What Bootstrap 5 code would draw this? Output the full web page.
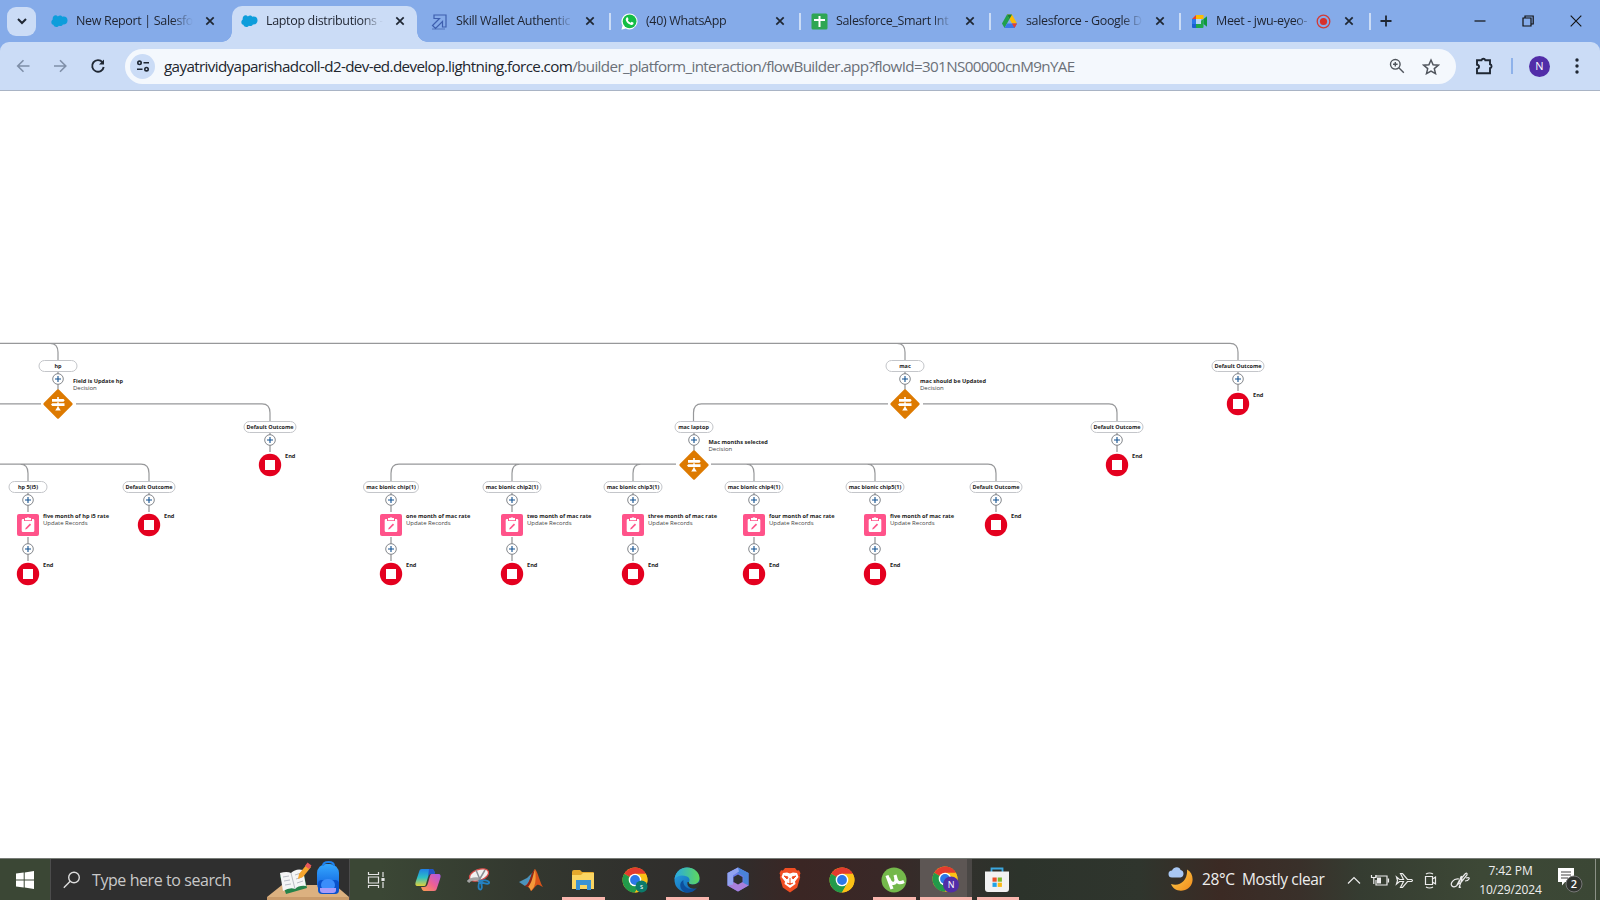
<!DOCTYPE html>
<html lang="en">
<head>
<meta charset="utf-8">
<title>Laptop distributions</title>
<link href="https://cdn.jsdelivr.net/npm/bootstrap@5.3.0/dist/css/bootstrap.min.css" rel="stylesheet">
<style>
html,body{height:100%}
body{font-family:"Open Sans","Noto Sans",sans-serif;color:#1f2430;overflow:hidden;background:#fff}
svg{display:block;flex:none}
.app{width:1600px;height:900px}
.strip{height:42px;background:#85abe9;padding-left:7px}
.tabsearch{width:29px;height:29px;border-radius:9px;background:#cbdcf6;margin-right:4px;flex:none}
.btab{width:190px;height:42px;padding-left:11px;font-size:12.5px;line-height:18px;position:relative;flex:none}
.btab .ttl{width:117px;margin-left:8px;white-space:nowrap;letter-spacing:-.34px;-webkit-mask-image:linear-gradient(90deg,#000 82%,transparent);mask-image:linear-gradient(90deg,#000 82%,transparent)}
.btab .x{margin-left:12px}
.btab.sep::after{content:"";position:absolute;right:-1px;top:13px;width:2px;height:17px;background:#cbdcf6}
.btab.rec .ttl{width:96px}
.btab.rec .x{margin-left:13px}
.btab.on::before{content:"";position:absolute;left:2px;top:6px;width:185px;height:36px;background:#cbdcf6;border-radius:10px 10px 0 0}
.btab.on>*{position:relative}
.flare{position:absolute!important;bottom:0;width:10px;height:10px}
.flare.l{left:-8px;background:radial-gradient(circle at 0 0,transparent 9.5px,#cbdcf6 10px)}
.flare.r{right:-7px;background:radial-gradient(circle at 100% 0,transparent 9.5px,#cbdcf6 10px)}
.bar-wrap{background:#85abe9}
.tools{height:49px;background:#cbdcf6;border-bottom:1px solid #a9b4c5;border-radius:9px 9px 0 0;padding-left:14px}
.omni{width:1331px;height:35px;border-radius:18px;background:#f4f8fd;padding-left:5px;padding-right:16px;margin-left:17px;flex:none}
.chip{width:25px;height:25px;border-radius:50%;background:#cbdcf6}
.url{font-size:15.2px;letter-spacing:-.63px;margin-left:9px;white-space:nowrap;line-height:22px;color:#6b7078}
.url b{font-weight:400;color:#22262e}
.ava{width:21px;height:21px;border-radius:50%;background:#512da8;color:#fff;font-size:11px}
.canvas{position:relative;flex:1;overflow:hidden}
.canvas .wires{position:absolute;left:0;top:0}
.nd{position:absolute;transform:translate(-50%,-50%)}
.pill{height:12px;min-width:39px;border:1px solid #c4c6ca;border-radius:6px;background:#fff;font-weight:700;font-size:5.5px;line-height:10px;text-align:center;white-space:nowrap;color:#222}
.cap{position:absolute;white-space:nowrap;font-size:6px;line-height:8px;transform:translateY(-50%);color:#444}
.cap.t{font-weight:700;color:#1d1d1d;font-size:5.62px}
.task{height:42px;color:#eee;background:linear-gradient(90deg,#3b4735 0,#3b4735 380px,#33382f 520px,#30302d 640px,#302c2b 740px,#3b2624 800px,#392827 880px,#31302c 960px,#2c332b 1020px,#2f352d 1140px,#3b2a24 1220px,#39302a 1300px,#353c31 1360px,#3d4836 1480px,#3b4735 1600px);border-top:1px solid #777b76}
.start{width:50px;flex:none}
.find{width:300px;flex:none;background:#2f2f2f;border:1px solid #4c4c4c;border-width:0 1px;padding-left:12px;font-size:16px;color:#c9c9c9}
.find span{margin-left:11px;letter-spacing:-.42px;white-space:nowrap}
.ic{width:51.8px;height:41px;position:relative;flex:none}
.ic.run::after{content:"";position:absolute;bottom:0;left:5px;right:4px;height:3px;background:#f9b6ae}
.ic.cur{background:linear-gradient(90deg,#5d5654 47px,#4a4745 47px)}
.ic.cur::after{left:0;right:0}
.wx{font-size:15.5px;white-space:nowrap;letter-spacing:-.36px}
.clk{font-size:12px;line-height:19px;text-align:center;width:69px;letter-spacing:-.1px;white-space:nowrap}
</style>
</head>
<body>
<svg width="0" height="0" class="position-absolute">
<defs>
<symbol id="x" viewBox="0 0 10 10"><path d="M1.3 1.3l7.4 7.4M8.700 1.3L1.3 8.700" stroke="#1f2733" stroke-width="1.7"/></symbol>
<symbol id="sf" viewBox="0 0 18 14"><path d="M7.300 2.200C8.600.7 11 .8 12 2.600c3-1 5.500.8 5.500 3.800 0 2.900-2.400 4.800-4.900 4.300-.9 1.600-2.800 2-4.200 1.200-1.700 2.300-5 1.700-5.900-.9C.7 10.700.2 9 .4 7.700c.1-1.100.7-1.900 1.400-2.400C1.300 1.500 5-.6 7.300 2.200z" fill="#0d9ddb"/></symbol>
<symbol id="chrome" viewBox="0 0 26 26"><circle cx="13" cy="13" r="12.500" fill="#fbc116"/><path d="M13 13L2.200 6.700A12.500 12.500 0 0 1 23.800 6.700z" fill="#e33b2e"/><path d="M13 .5a12.500 12.500 0 0 1 10.800 6.250H13z" fill="#e33b2e"/><path d="M2.200 6.700A12.500 12.500 0 0 0 13 25.500L18.400 16.100 13 13z" fill="#229a4a"/><path d="M13 6.750h10.800A12.500 12.500 0 0 1 13 25.500l5.400-9.400z" fill="#fbc116"/><circle cx="13" cy="13" r="6.300" fill="#fff"/><circle cx="13" cy="13" r="4.900" fill="#2b78e8"/></symbol>
<linearGradient id="g1" x1="0" y1="0" x2="0" y2="1"><stop offset="0" stop-color="#1f7fe8"/><stop offset=".5" stop-color="#2cbfc4"/><stop offset="1" stop-color="#e2d23a"/></linearGradient>
<linearGradient id="g2" x1="1" y1="0" x2="0" y2="1"><stop offset="0" stop-color="#a85be8"/><stop offset=".5" stop-color="#ef5f95"/><stop offset="1" stop-color="#f9a349"/></linearGradient>
<linearGradient id="g3" x1="0" y1="0" x2="1" y2="1"><stop offset="0" stop-color="#2ba5e0"/><stop offset="1" stop-color="#0a5bb0"/></linearGradient>
<linearGradient id="g4" x1="0" y1="0" x2="1" y2="0"><stop offset="0" stop-color="#28a8e4"/><stop offset="1" stop-color="#5fd85c"/></linearGradient>
<linearGradient id="g5" x1="0" y1="0" x2="0" y2="1"><stop offset="0" stop-color="#35a8ff"/><stop offset="1" stop-color="#0a55d8"/></linearGradient>
<linearGradient id="g6" x1="0" y1="0" x2="1" y2="1"><stop offset="0" stop-color="#ffd34d"/><stop offset="1" stop-color="#f08a1c"/></linearGradient>
</defs>
</svg>
<div class="app d-flex flex-column">
<div class="strip d-flex align-items-center">
  <div class="tabsearch d-flex align-items-center justify-content-center"><svg width="10" height="7"><path d="M1 1l4 4 4-4" fill="none" stroke="#1f2733" stroke-width="2"/></svg></div>
  <div class="btab d-flex align-items-center"><svg width="17" height="14"><use href="#sf"/></svg><div class="ttl">New Report | Salesfo</div><svg class="x" width="10" height="10"><use href="#x"/></svg></div>
  <div class="btab on d-flex align-items-center"><i class="flare l"></i><i class="flare r"></i><svg width="17" height="14"><use href="#sf"/></svg><div class="ttl">Laptop distributions -</div><svg class="x" width="10" height="10"><use href="#x"/></svg></div>
  <div class="btab sep d-flex align-items-center"><svg width="17" height="17" fill="none" stroke="#3e5fae" stroke-width="1.200"><path d="M3 2h12v12h-3.500V8.500L4.500 15.500 1.500 12.500 8.500 5.500H3z"/><path d="M1 16h13" stroke-width=".7"/></svg><div class="ttl">Skill Wallet Authentic</div><svg class="x" width="10" height="10"><use href="#x"/></svg></div>
  <div class="btab sep d-flex align-items-center"><svg width="17" height="17"><path d="M8.500.4a8 8 0 1 1-3.700 15.100L.4 16.700l1.200-4.200A8 8 0 0 1 8.500.4z" fill="#fff"/><circle cx="8.600" cy="8.400" r="6.900" fill="#14bd45"/><path d="M5.700 4.500c.8-.5 1.200 0 1.800 1.700L6.900 7.300c.7 1.400 1.500 2 2.700 2.500l1-1c1.700.7 2.100 1 1.900 1.600-.4 1.600-2.300 1.900-4 .9-2-1-3.700-3-3.800-4.800 0-.8.500-1.500 1-2z" fill="#fff"/></svg><div class="ttl">(40) WhatsApp</div><svg class="x" width="10" height="10"><use href="#x"/></svg></div>
  <div class="btab sep d-flex align-items-center"><svg width="17" height="17"><rect x=".5" y=".5" width="16" height="16" rx="1.500" fill="#2ea653"/><path d="M8.500 3v11M3 7h11" stroke="#fff" stroke-width="2"/></svg><div class="ttl">Salesforce_Smart Int</div><svg class="x" width="10" height="10"><use href="#x"/></svg></div>
  <div class="btab sep d-flex align-items-center"><svg width="17" height="17"><path d="M6 1.500h5l5 9h-5z" fill="#fbbc05"/><path d="M6 1.500L1 10.500 3.500 15 8.500 6z" fill="#20a04c"/><path d="M6 1.500h5L8.500 6z" fill="#12833a"/><path d="M3.500 15L6 10.500h10L13.500 15z" fill="#3a78ea"/><path d="M11 10.500h5L13.500 15z" fill="#e9402f"/></svg><div class="ttl">salesforce - Google D</div><svg class="x" width="10" height="10"><use href="#x"/></svg></div>
  <div class="btab sep rec d-flex align-items-center"><svg width="17" height="17"><path d="M1 6l4-4v4z" fill="#e9402f"/><path d="M5 2h7.500v4H5z" fill="#fbbc05"/><path d="M1 6h4v5H1z" fill="#2b78e8"/><path d="M1 11h4v4H2q-1 0-1-1z" fill="#1a5fd0"/><path d="M5 11h4V8.500l3.500-2.500V14q0 1-1 1H5z" fill="#1fa84a"/><path d="M12.500 6L16 3.200v10.600L12.500 11z" fill="#0f9a3c"/><path d="M5 6h5v5H5z" fill="#b8d4f4"/></svg><div class="ttl">Meet - jwu-eyeo-</div><svg width="15" height="15" class="ms-1"><circle cx="7.500" cy="7.500" r="6.300" fill="none" stroke="#d23a36" stroke-width="1.300"/><circle cx="7.500" cy="7.500" r="3.600" fill="#d8302b"/></svg><svg class="x" width="10" height="10"><use href="#x"/></svg></div>
  <svg width="12" height="12" style="margin-left:10px"><path d="M6 .5v11M.5 6h11" stroke="#1f2733" stroke-width="1.800"/></svg>
  <div class="ms-auto d-flex align-items-center" style="padding-right:18px;gap:36px"><svg width="12" height="12"><path d="M.5 6h11" stroke="#111" stroke-width="1.200"/></svg><svg width="12" height="12" fill="none" stroke="#111" stroke-width="1.200"><path d="M1 3h8v8H1zM3 3V1h8.200v8H9"/></svg><svg width="12" height="12"><path d="M.7.7l10.600 10.600M11.300.7L.7 11.300" stroke="#111" stroke-width="1.100"/></svg></div>
</div>
<div class="bar-wrap"><div class="tools d-flex align-items-center">
  <svg width="94" height="20" fill="none" stroke-width="1.600"><g stroke="#7f8fa8"><path d="M15.500 10H3.500M9.500 4.300L3.700 10l5.800 5.700"/><path d="M40 10h12M46 4.300l5.800 5.700L46 15.700"/></g><path d="M88.500 6.300A5.800 5.800 0 1 0 89.700 11" stroke="#1f2733" stroke-width="1.900"/><path d="M90 3.500v5h-5z" fill="#1f2733"/></svg>
  <div class="omni d-flex align-items-center"><div class="chip d-flex align-items-center justify-content-center"><svg width="14" height="12" fill="none" stroke="#1f2733" stroke-width="1.600"><circle cx="3.500" cy="2.800" r="1.700"/><path d="M7.500 2.800H13M1 9.200h5.500"/><circle cx="10.500" cy="9.200" r="1.700"/></svg></div>
  <div class="url"><b>gayatrividyaparishadcoll-d2-dev-ed.develop.lightning.force.com</b>/builder_platform_interaction/flowBuilder.app?flowId=301NS00000cnM9nYAE</div>
  <svg class="ms-auto" width="16" height="16" fill="none" stroke="#50555d" stroke-width="1.400"><circle cx="6.300" cy="6.300" r="4.800"/><path d="M9.800 9.800l5 5M4 6.300h4.600M6.300 4v4.600"/></svg>
  <svg style="margin-left:17px" width="18" height="17" fill="none" stroke="#50555d" stroke-width="1.500"><path d="M9 2l2.100 4.700 5.100.5-3.900 3.400 1.200 5L9 13l-4.500 2.600 1.200-5L1.800 7.200l5.100-.5z"/></svg></div>
  <svg style="margin-left:19px" width="18" height="18"><path d="M2 3.200h4.500a2 2 0 0 1 3.800 0H15v4a2 2 0 0 1 0 3.900v5.200H2v-4.600c2.700-.5 2.700-3.600 0-4z" fill="none" stroke="#1f2733" stroke-width="1.900"/></svg>
  <span style="margin-left:18px;width:2px;height:16px;background:#8eb2ea"></span>
  <div class="ava d-flex align-items-center justify-content-center" style="margin-left:16px">N</div>
  <svg style="margin-left:25px" width="4" height="16" fill="#1f2733"><circle cx="2" cy="2" r="1.700"/><circle cx="2" cy="8" r="1.700"/><circle cx="2" cy="14" r="1.700"/></svg>
</div></div>
<main class="canvas" id="flow">
<svg class="wires" width="1600" height="767" viewBox="0 91 1600 767" fill="none" stroke="#97989a" stroke-width="1.200">
<path d="M0 343.300H1230q8 0 8 9V360M50 343.300q8 0 8 9V360M897 343.300q8 0 8 9V360"/>
<path d="M0 403.800H41M76 403.800H262q8 0 8 9V421M888 403.800H701.500q-8 0-8 9V421M923 403.800H1109q8 0 8 9V421"/>
<path d="M0 464.200H141q8 0 8 9V481M20 464.200q8 0 8 9V481M676 464.200H399q-8 0-8 9V481M520 464.200q-8 0-8 9V481M641 464.200q-8 0-8 9V481M711 464.200H988q8 0 8 9V481M746 464.200q8 0 8 9V481M867 464.200q8 0 8 9V481"/>
</svg>
</main>
<footer class="task d-flex align-items-stretch">
  <div class="start d-flex align-items-center justify-content-center"><svg width="18" height="18" fill="#fff"><path d="M0 2.600L7.700 1.500V8.500H0zM8.700 1.400L18 0v8.500H8.700zM0 9.500h7.700v7L0 15.400zM8.700 9.500H18V18L8.700 16.600z"/></svg></div>
  <div class="find d-flex align-items-center"><svg width="18" height="18" fill="none" stroke="#ddd" stroke-width="1.400"><circle cx="11" cy="6.500" r="5.300"/><path d="M7.200 10.300L.8 16.800"/></svg><span>Type here to search</span>
   <svg class="ms-auto align-self-end" width="82" height="41" viewBox="268 859 82 41"><path d="M268 897l15-12h53l14 12v3h-82z" fill="#dcb180"/><path d="M268 897h82v3h-82z" fill="#c99b6b"/><path d="M281 876l23-5 4 17-21 6z" fill="#25834a"/><path d="M281 873q7-2 11 0 5-5 12-3l3 16q-7-1-11 3-5-2-12 2z" fill="#f4f5f6"/><path d="M292 873l4 16M284 877l6-1M285 881l6-1M286 885l6-1M296 875l6-2M297 879l6-2M298 883l6-2" stroke="#b8bcc4" fill="none"/><path d="M299 879l1-5 8-10 4 3-8 10z" fill="#f6a52c"/><path d="M306 866l2.500-3.500 4 3-2.500 3.500z" fill="#e8575a"/><rect x="318" y="864" width="22" height="29" rx="9" fill="url(#g5)"/><rect x="319" y="880" width="21" height="14" rx="4" fill="#0a52cc"/><path d="M324 866q0-4 5.500-4t5.500 4" stroke="#1d83f0" stroke-width="2" fill="none"/><rect x="322" y="879" width="14" height="12" rx="6" fill="#3b8dfa"/><path d="M321 888h16v2q0 3-3 3h-10q-3 0-3-3z" fill="#a79bfa"/></svg></div>
  <div class="ic d-flex align-items-center justify-content-center"><svg width="18" height="18" fill="none" stroke="#e3e3e3" stroke-width="1.200"><path d="M1.500 1v2.500h10V1M1.500 17v-2.500h10V17M1.500 6h10v6h-10zM16 1v5M16 11v6"/><path d="M15 7.500h2v2h-2z" fill="#fff"/></svg></div>
  <div class="ic d-flex align-items-center justify-content-center"><svg width="26" height="24"><path d="M7 1h9c3 0 3 2 4 4h-3c-2 0-3 1-4 4l-2 7c-.6 2-1 2-3 2H3c-3 0-3-2-2-5l3-9c.6-2 1-3 3-3z" fill="url(#g1)"/><path d="M19 23h-9c-3 0-3-2-4-4h3c2 0 3-1 4-4l2-7c.6-2 1-2 3-2h5c3 0 3 2 2 5l-3 9c-.6 2-1 3-3 3z" fill="url(#g2)"/><path d="M14 1h3c2 0 2.500 2 3 5h-4c-2 0-2 1-3 3z" fill="#2354c8"/></svg></div>
  <div class="ic d-flex align-items-center justify-content-center"><svg width="24" height="25"><ellipse cx="12" cy="8" rx="10" ry="5.500" transform="rotate(-20 12 8)" fill="#f1f1f1" stroke="#d64b48" stroke-width="1.300"/><path d="M1 15q3-4 11-3" stroke="#a4a4a4" stroke-width="3" fill="none"/><path d="M9 3l5 12M18 3l-7 12" stroke="#8b8f94" stroke-width="1.500"/><path d="M13 14c3-1 8-1 9 1s-3 3-9-1zM13 14c-2 3-2 8 0 8.500s3-4 0-8.500z" fill="none" stroke="#2380c0" stroke-width="1.800"/></svg></div>
  <div class="ic d-flex align-items-center justify-content-center"><svg width="26" height="24"><path d="M1 14l8-4 5-5-4 12-3 1z" fill="#4b93bd"/><path d="M7 18c5-2 6-13 10-17 3 3 5 14 8 18-3-1-4-3-6-2-3 2-4 5-6 6-1-3-3-5-6-5z" fill="#d95319"/><path d="M17 1c1 7 1 13-1 18l-3 4c-1-3-2-4-4-5 4-3 5-12 8-17z" fill="#f39a3b"/><path d="M17 1c-4 4-5 15-10 17l3 1c4-4 5-12 7-18z" fill="#8c2318"/></svg></div>
  <div class="ic run d-flex align-items-center justify-content-center"><svg width="24" height="22"><path d="M1 3q0-2 2-2h6l2 2h11q1 0 1 1v16H1z" fill="#e5a82c"/><path d="M1 6h9l2-2h11v16H1z" fill="#fbd562"/><path d="M5 11h15v10h-4v-5H9v5H5z" fill="#3b92d4"/></svg></div>
  <div class="ic d-flex align-items-center justify-content-center"><svg width="26" height="26"><use href="#chrome"/><circle cx="19.500" cy="19.500" r="6" fill="#0b7a6a"/><text x="17.900" y="22" font-size="6.500" fill="#fff">s</text></svg></div>
  <div class="ic run d-flex align-items-center justify-content-center"><svg width="26" height="26"><circle cx="13" cy="13" r="12.500" fill="url(#g3)"/><path d="M.6 12C1.500 4.500 7 .5 13 .5c7 0 12.500 5 12.500 10.500 0 4-3 6.500-6.500 6.500-3 0-5-1-4-2.500 1-1.300 1-4-2-5.500C8 7.500 3 8.500.6 12z" fill="url(#g4)"/><path d="M9.500 13c-1 5 3 9 8 9 2.500 0 4.500-.7 5.500-1.300C20 25 15 26.500 10.500 25 5 22 5 15 9.500 13z" fill="#0d4f9c"/><path d="M15 15c-1 1.500 1 2.500 4 2.500 2.600 0 4.600-1 5.700-2.500l.8 3.500-2 2.500c-6 2-11-1-10-6z" fill="#30332f"/></svg></div>
  <div class="ic d-flex align-items-center justify-content-center"><svg width="24" height="25"><path d="M12 .5L22.500 6v12.500L12 24.500 1.500 18.500V6z" fill="#6a7be8"/><path d="M12 .5L22.500 6v12.500l-5 2V9L10 5z" fill="#4a83d8"/><path d="M1.500 18.500L12 13l5.500 3 5 2.500L12 24.500z" fill="#a980dc"/><path d="M1.500 6L12 .5l1 4-6 4v9l-5.500 1z" fill="#91a4f0"/><path d="M12 7.500l4.500 2.500v5L12 17.500 7.500 15v-5z" fill="#303030"/></svg></div>
  <div class="ic d-flex align-items-center justify-content-center"><svg width="22" height="26"><path d="M6 1h10l2 2.500 2-.3 1.500 3-.8 2 .5 2-3 10.300L11 25.500 3.800 20.500.8 10.200l.5-2-.8-2 1.500-3 2 .3z" fill="#f14e23"/><path d="M4 6l4-.5 3 1 3-1L18 6l1.500 4-3.500 4.500.5 2.500L11 21l-5.500-4 .5-2.500L2.500 10z" fill="#fff"/><path d="M5 9l4 1-1 2zM17 9l-4 1 1 2zM11 11v5M8 16l3 1.500 3-1.500" fill="#f14e23" stroke="#f14e23"/></svg></div>
  <div class="ic d-flex align-items-center justify-content-center"><svg width="26" height="26"><use href="#chrome"/></svg></div>
  <div class="ic run d-flex align-items-center justify-content-center"><svg width="26" height="26"><circle cx="13" cy="13" r="12.500" fill="#74b84b"/><path d="M6 8.500l5 13.500M7.500 11c1.500 4.500 3 6 5.500 5.200S15.500 12 14 8M14.500 10.500c1.500 5 3.500 6.500 8.500 4" fill="none" stroke="#fff" stroke-width="3.200"/></svg></div>
  <div class="ic run cur d-flex align-items-center justify-content-center"><svg width="28" height="28"><use href="#chrome" width="26" height="26"/><circle cx="19" cy="18.500" r="8" fill="#512da8"/><text x="15.800" y="22" font-size="9" fill="#fff">N</text></svg></div>
  <div class="ic run d-flex align-items-center justify-content-center"><svg width="26" height="26"><path d="M7.500 6V1.500h11V6" fill="none" stroke="#3ba7e0" stroke-width="1.800"/><path d="M1 4.500h24V22q0 3-3 3H4q-3 0-3-3z" fill="#f2f2f2"/><path d="M8.500 10.500h4.200v4.200H8.500z" fill="#ea4f28"/><path d="M13.700 10.500h4.200v4.200h-4.200z" fill="#7db82c"/><path d="M8.500 15.700h4.200v4.200H8.500z" fill="#20a2e6"/><path d="M13.700 15.700h4.200v4.200h-4.200z" fill="#fbb813"/></svg></div>
  <div class="ms-auto d-flex align-items-center">
   <svg width="26" height="26"><path d="M19 2.500c8 4 7.500 17.500-2 20.500-6 2-12-.5-14-6 9 3 17-4 16-14.500z" fill="url(#g6)"/><path d="M4 10.500a3.500 3.500 0 0 1 0-7C6-1 12-.5 12.500 3c4 .5 4 7 0 7.500z" fill="#a9c8f4"/></svg>
   <div class="wx" style="margin-left:8px;width:40px">28°C</div><div class="wx" style="width:104px">Mostly clear</div>
   <svg width="130" height="24" viewBox="1346 867 130 24" fill="none" stroke="#ececec" stroke-width="1.200"><path d="M1348 882.500l6-6 6 6"/><path d="M1375 875h12v9h-11v-5M1388.500 877.500v4"/><path d="M1377 876.500h4v6h-4z" fill="#eee" stroke="none"/><path d="M1371.500 874v2.500h4.500V874M1373.800 877v6"/><path d="M1396.500 876l3 2.500h4l-3-6h2l5 6h4q2 .8 0 2h-4l-5 6h-2l3-6h-4l-3 2.500 1-3.500z"/><path d="M1425.500 875.500h7v8h-7zM1432.500 878l3-2v7l-3-2M1426 873q3.500-2 7 0M1426 886q3.500 2 7 0"/><path d="M1459 880l6.500-7.500q2-1 1.500 1.500l-6.500 8-3 1zM1466 877q4-1 3 1-1 2-4 2M1459 878c-6-1-9 5-7 7s7 0 8-6 3-4 1 2-3 6 0 5"/></svg>
   <div class="clk">7:42 PM<br>10/29/2024</div>
   <svg style="margin-left:11px;margin-right:11px" width="28" height="30"><path d="M2 3h16v14H9l-3 3.500V17H2z" fill="#fff"/><path d="M5 7h10M5 10h10M5 13h7" stroke="#444" stroke-width="1.200"/><circle cx="18" cy="19" r="8" fill="#2f332e" stroke="#777"/><text x="14.800" y="23" font-size="11" font-weight="600" fill="#fff">2</text></svg>
   <span style="width:1px;height:41px;background:#8b9186;margin-right:4px"></span>
  </div>
</footer>
</div>
<script>
// Flow elements: canvas coordinates in window pixels, toolbar height is subtracted on placement.
const TOP = 91, root = document.getElementById('flow');
const put = (cls, x, y, html, style = '') => root.insertAdjacentHTML('beforeend', `<div class="${cls}" style="left:${x}px;top:${y - TOP}px;${style}">${html}</div>`);
const art = {
  plus: '<svg width="12" height="24"><path d="M6 0v24" stroke="#8f9092" stroke-width="1.200"/><circle cx="6" cy="12" r="5.300" fill="#fff" stroke="#777b80" stroke-width=".9"/><path d="M6 9v6M3 12h6" stroke="#12508f" stroke-width="1.100"/></svg>',
  end: '<svg width="24" height="24"><circle cx="12" cy="12" r="11.200" fill="#e4001f"/><path d="M7 7h10v10H7z" fill="#fff"/></svg>',
  decision: '<svg width="32" height="32"><rect x="5.200" y="5.200" width="21.600" height="21.600" rx="1.500" transform="rotate(45 16 16)" fill="#dd7a01"/><path d="M15.200 9h1.600v2h4.700l1.200 1.300-1.200 1.400H10v-2.700h5.200zM15.200 14.300h1.600v1h5.700V18H10.300L9 16.600l1.300-1.300h4.900zM15.200 18.500h1.600v1l2 3h-5.600l2-3z" fill="#fff"/></svg>',
  update: '<svg width="22" height="22"><rect width="22" height="22" rx="2" fill="#ff538a"/><path d="M6 5h1v2h8V5h1q1.300 0 1.300 1.300v10.400Q17.300 18 16 18H6q-1.300 0-1.300-1.300V6.300Q4.700 5 6 5zM8 4h1.500q1.500-1.500 3 0H14v2.300H8z" fill="#fff"/><path d="M8.200 15.500l.4-1.600 4.300-4.300 1.200 1.200-4.300 4.300z" fill="#ff538a"/></svg>'
};
const pill = (x, y, t, w) => put('nd pill', x, y, t, `width:${w}px`);
const icon = (x, y, k) => put('nd', x, y, art[k]);
const end = (x, y) => { icon(x, y, 'end'); put('cap t', x + 15, y - 9.200, 'End'); };
const branch = (x, y, t, w) => { icon(x, y + 13, 'plus'); pill(x, y, t, w); };
const outcome = (x, y) => { branch(x, y, 'Default Outcome', 53); end(x, y + 38); };
const decision = (x, y, t, w, name) => { branch(x, y, t, w); icon(x, y + 38, 'decision'); put('cap t', x + 15, y + 14.900, name); put('cap', x + 15, y + 22.300, 'Decision'); };
const update = (x, t, w, name) => { branch(x, 487, t, w); icon(x, 525, 'update'); put('cap t', x + 15, 516.200, name); put('cap', x + 15, 523, 'Update Records'); icon(x, 549.300, 'plus'); end(x, 574.400); };
decision(58, 366, 'hp', 39, 'Field is Update hp');
decision(905, 366, 'mac', 39, 'mac should be Updated');
decision(693.500, 426.700, 'mac laptop', 39, 'Mac months selected');
outcome(1238, 366); outcome(270, 426.700); outcome(1117, 426.700); outcome(149, 487); outcome(996, 487);
update(28, 'hp 5(i5)', 39, 'five month of hp i5 rate');
update(391, 'mac bionic chip(1)', 56, 'one month of mac rate');
['two', 'three', 'four', 'five'].forEach((n, i) => update(512 + 121 * i, `mac bionic chip${i + 2}(1)`, 59, `${n} month of mac rate`));
</script>
<script src="https://cdn.jsdelivr.net/npm/bootstrap@5.3.0/dist/js/bootstrap.bundle.min.js"></script>
</body>
</html>
